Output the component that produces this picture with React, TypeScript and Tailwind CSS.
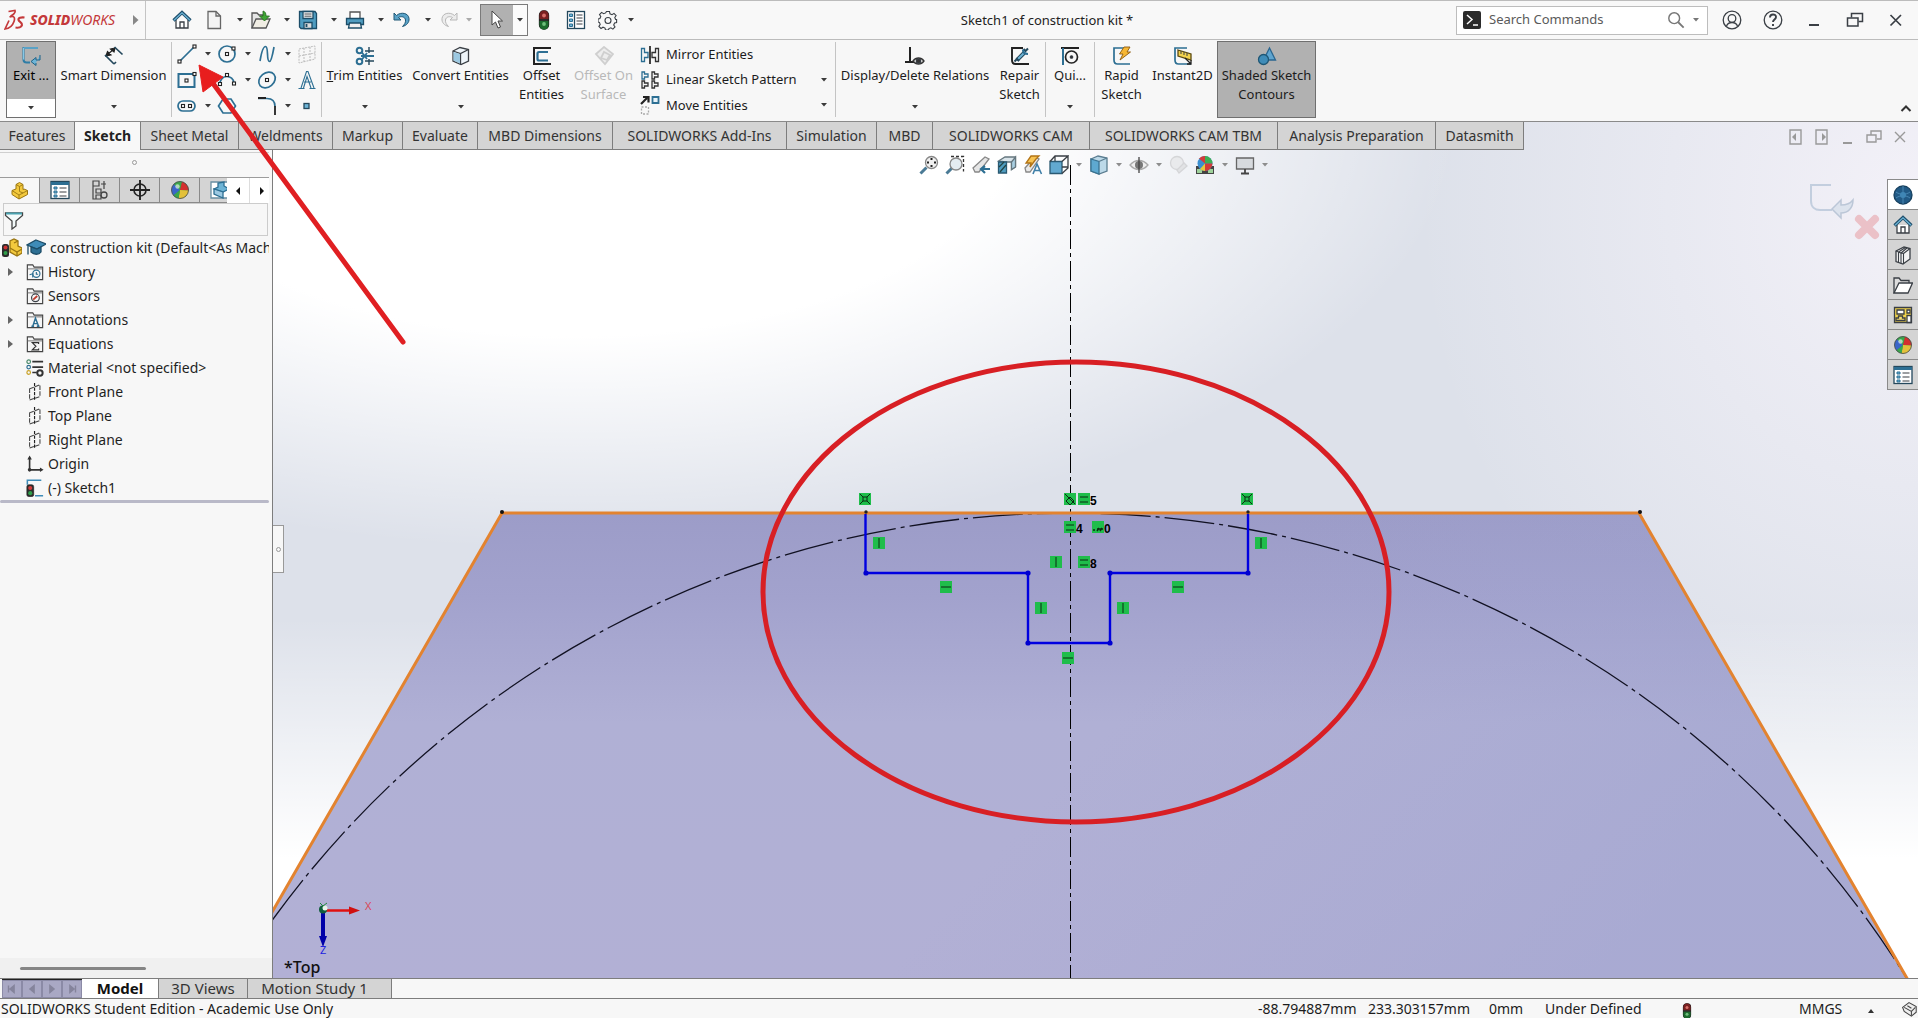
import React from "react";

type P = { children?: React.ReactNode; className?: string };

const INK = "#3a3f45";
const BLUE = "#2d6f93";
const SKY = "#6db4d6";

function Ico({ children, className = "h-5 w-5" }: P) {
  return (
    <svg viewBox="0 0 20 20" className={"shrink-0 " + className} fill="none" stroke={INK} strokeWidth="1.3" aria-hidden="true">
      {children}
    </svg>
  );
}

function Caret({ className = "text-[#3a3a3a]" }: P) {
  return (
    <svg viewBox="0 0 6 4" className={"h-1 w-1.5 shrink-0 " + className} fill="currentColor" aria-hidden="true">
      <path d="M0 0h6L3 3.6z" />
    </svg>
  );
}

function Sep() {
  return <div className="my-px w-px shrink-0 bg-[#c4c4c4]" />;
}

/* ---------- shared icons ---------- */

const Home = () => (
  <Ico>
    <path d="M4 10v8h12v-8" fill="#fff" />
    <path d="M8 18v-6h4v6" />
    <path d="M1.500 10.500 10 2.500l8.500 8" stroke="#1f4f6c" strokeWidth="3.200" />
    <path d="M2 10.200 10 2.800l8 7.400" stroke={SKY} strokeWidth="1.200" />
  </Ico>
);
const Traffic = ({ className = "h-5 w-5" }: P) => (
  <Ico className={className}>
    <rect x="5.500" y="1" width="9" height="18" rx="4" fill="#2c2c2c" stroke="#222" />
    <path d="M5.500 9V5a4 4 0 0 1 9 0v4z" fill="#7a2020" stroke="none" />
    <path d="M5.500 11v4a4 4 0 0 0 9 0v-4z" fill="#1d6b2e" stroke="none" />
    <circle cx="10" cy="5.500" r="1.900" fill="#d9706a" stroke="none" />
    <circle cx="10" cy="14" r="1.900" fill="#6fbf7c" stroke="none" />
  </Ico>
);
const ListIcon = () => (
  <Ico>
    <rect x="1.500" y="1.500" width="17" height="17" fill="#fff" stroke="#24485c" />
    <path d="M8.500 2v16" stroke="#24485c" />
    <path d="M3.500 4h3v2.500h-3zM3.500 9h3v2.500h-3zM3.500 14h3v2.500h-3z" fill={SKY} stroke={BLUE} strokeWidth="1" />
    <path d="M10.500 5h6M10.500 8h6M10.500 11h6M10.500 14h6" strokeWidth="1.200" />
  </Ico>
);
const FormIcon = () => (
  <Ico>
    <rect x="1" y="1.500" width="18" height="17" fill="#fff" stroke="#24485c" />
    <path d="M1 3.500h18" stroke={BLUE} strokeWidth="3" />
    <path d="M4 7h3v2H4zM4 11h3v2H4zM4 15h3v2H4z" fill={SKY} stroke={BLUE} strokeWidth="1" />
    <path d="M9.500 8h7M9.500 12h7M9.500 16h7" strokeWidth="1.200" />
  </Ico>
);
const Ball = () => (
  <Ico>
    <circle cx="10" cy="10" r="8.500" fill="#2f9e4a" stroke="none" />
    <path d="M10 10 4 4A8.500 8.500 0 0 0 3.500 15.500z" fill="#3a66c9" stroke="none" />
    <path d="M10 10 4 4a8.500 8.500 0 0 1 8-2.200z" fill="#3aa64c" stroke="none" />
    <path d="M10 10 12 1.800a8.500 8.500 0 0 1 6.500 8.700z" fill="#d32f2f" stroke="none" />
    <path d="M10 10 8.500 18.500a8.500 8.500 0 0 0 10-8z" fill="#e3c13a" stroke="none" />
    <path d="M10 10 3.500 15.500a8.500 8.500 0 0 0 5 3z" fill="#3aa64c" stroke="none" />
    <circle cx="7.500" cy="6.500" r="2.200" fill="#fff" opacity=".6" stroke="none" />
    <circle cx="10" cy="10" r="8.500" stroke="#4a4a4a" strokeWidth=".8" />
  </Ico>
);
const PartIcon = () => (
  <Ico>
    <path d="M2 9.500v4l7 4.500 8.500-4.500v-4L14 8l-1 .5V3.500L9.500 1.500 6 3.500V8z" fill="#f3c93d" stroke="#9a7613" strokeWidth="1" />
    <path d="M6 3.500l3.500 2 3.500-2M9.500 5.500v5l3.500 1.500 4.500-2.500M2 9.500l7 4.500v4M9 14l4-2" stroke="#9a7613" strokeWidth=".9" />
  </Ico>
);

/* ---------- title bar ---------- */

function QuickButton({ label, children, dim, w = "w-[47px]" }: { label: string; children: React.ReactNode; dim?: boolean; w?: string }) {
  return (
    <div className={"flex shrink-0 items-center justify-between pr-1 " + w}>
      <button aria-label={label} className="flex">{children}</button>
      <button aria-label={label + " options"} className="p-1"><Caret className={dim ? "text-[#aaa]" : "text-[#3a3a3a]"} /></button>
    </div>
  );
}

function TitleBar() {
  return (
    <header className="flex h-10 items-stretch border-b border-t border-[#bcbcbc] bg-[#f8f8f8]">
      <div className="flex w-[146px] shrink-0 items-center border-r border-[#c4c4c4] pl-1">
        <svg viewBox="0 0 22 22" className="h-[22px] w-[22px]" fill="none" stroke="#c4393a" strokeWidth="1.700" aria-hidden="true">
          <path d="M4.500 2.500 11 1.500c1 2-2 4.500-4.500 5.500" />
          <path d="M5.500 8c4-1.500 6 0 4.500 4.500C8.500 17 5 19.500 1 20l4-8.500" />
          <path d="M20.500 8.500c-3.500-.5-6.500.5-6 2.500.4 1.800 4 2.500 3.500 5-.4 2.200-3.500 3-6.500 2.500" strokeWidth="2.100" />
        </svg>
        <span className="ml-1 text-sm italic text-[#c4393a]"><b className="font-extrabold">SOLID</b>WORKS</span>
        <button aria-label="Show menus" className="ml-auto mr-1.5">
          <svg viewBox="0 0 6 10" className="h-2.5 w-1.5" fill="#888"><path d="M0 0l5.500 5L0 10z" /></svg>
        </button>
      </div>
      <div className="flex items-center pl-[26px]">
        <button aria-label="Home" className="mr-3"><Home /></button>
        <QuickButton label="New">
          <Ico><path d="M4 1.500h8l4.500 4.500v12.500H4z" fill="#f4f4f4" stroke="#666" /><path d="M12 1.500V6h4.500" stroke="#666" /></Ico>
        </QuickButton>
        <QuickButton label="Open">
          <Ico><path d="M1 18V3h5l2 2h4v4" fill="#e6e6e6" stroke="#555" /><path d="M1 18 5 9h14l-4 9z" fill="#f1eee4" stroke="#555" /><path d="M12 1v5h-3.500l5 5 5-5H15c0-3-1-4.500-3-5z" fill="#3fa535" stroke="#236b1c" strokeWidth=".8" /></Ico>
        </QuickButton>
        <QuickButton label="Save">
          <Ico><path d="M1.500 1.500h15.500l1.500 2v15H3l-1.500-1.500z" fill="#4f9cc0" stroke="#1c4d68" /><path d="M5 1.500h10v7H5z" fill="#f3f3f3" stroke="#1c4d68" /><path d="M6.500 4h7M6.500 6.200h7" strokeWidth=".9" /><path d="M6 12.500h8v6H6z" fill="#ddd" stroke="#1c4d68" /><path d="M8.500 14v3" stroke="#1c4d68" strokeWidth="1.800" /></Ico>
        </QuickButton>
        <QuickButton label="Print">
          <Ico><path d="M5 8V2h10v6" fill="#fff" stroke="#555" /><path d="M1.500 8.500h17v6h-17z" fill="#4f9cc0" stroke="#1c4d68" /><path d="M4.500 13h11l1 5h-13z" fill="#f0f0f0" stroke="#1c4d68" /></Ico>
        </QuickButton>
        <QuickButton label="Undo">
          <Ico><path d="M2 3v7h7L6.500 7.500C9 6 13 6.500 13.500 10c.3 2.500-1 4.500-3 6.500 4-1 7-4 6.500-8C16.500 3 9 1.500 4.500 5.500z" fill="#5aa3c8" stroke="#1f5775" strokeWidth="1" /></Ico>
        </QuickButton>
        <QuickButton label="Redo" dim w="w-[41px]">
          <Ico><path d="M18 3v7h-7l2.500-2.500C11 6 7 6.500 6.500 10c-.3 2.500 1 4.500 3 6.500-4-1-7-4-6.500-8C3.500 3 11 1.500 15.500 5.500z" fill="#ececec" stroke="#b8b8b8" strokeWidth="1" /></Ico>
        </QuickButton>
        <div className="flex h-8 border border-[#7a7a7a]">
          <button aria-label="Select" className="flex w-8 items-center justify-center bg-[#b1b1b1]">
            <Ico><path d="M5 1v14l3.500-3 2.500 6 2.500-1-2.500-6h4.500z" fill="#fff" stroke="#444" strokeWidth="1" /></Ico>
          </button>
          <button aria-label="Select options" className="flex w-3.5 items-center justify-center bg-[#fbfbfb]"><Caret /></button>
        </div>
        <button aria-label="Rebuild" className="ml-1.5"><Traffic /></button>
        <button aria-label="File properties" className="ml-3"><ListIcon /></button>
        <button aria-label="Options" className="ml-3">
          <Ico><path d="M8.500 1.500h3l.5 2.300 2 .9 2-1.300 2.100 2.100-1.300 2 .8 2h1v3l-2 .5-.9 2 1.300 2-2.100 2.100-2-1.300-2 .8-.4 1.400h-3l-.5-1.900-2-.9-2 1.300-2.100-2.100 1.300-2-.8-2-1.400-.4v-3l1.900-.5.900-2-1.300-2 2.100-2.100 2 1.300 2-.8z" strokeWidth="1.100" /><circle cx="10" cy="10.500" r="3" strokeWidth="1.100" /></Ico>
        </button>
        <button aria-label="Options menu" className="ml-1.5 p-1"><Caret /></button>
      </div>
      <h1 className="flex flex-1 items-center justify-center pt-0.5 text-[13px] text-[#222]">Sketch1 of construction kit *</h1>
      <div className="flex items-center pr-3">
        <label className="flex h-[29px] w-[252px] items-center border border-[#bdbdbd] bg-white pl-1.5 pr-1">
          <svg viewBox="0 0 18 18" className="h-[18px] w-[18px] shrink-0" aria-hidden="true">
            <rect width="18" height="18" rx="2" fill="#2b2b2b" />
            <path d="M4 4l5 4.500L4 13M10 14h5" stroke="#fff" strokeWidth="1.500" fill="none" />
          </svg>
          <input aria-label="Search commands" placeholder="Search Commands" className="ml-2 min-w-0 flex-1 bg-transparent text-[13px] text-[#555] outline-none placeholder:text-[#5a5a5a]" />
          <Ico className="h-[18px] w-[18px]"><circle cx="8" cy="8" r="6" stroke="#777" strokeWidth="1.600" /><path d="m12.500 12.500 6 6" stroke="#777" strokeWidth="2" /></Ico>
          <Caret className="ml-2 mr-1 text-[#777]" />
        </label>
        <button aria-label="Account" className="ml-3.5"><Ico><circle cx="10" cy="10" r="8.800" /><circle cx="10" cy="8.500" r="3.800" /><path d="M4.500 16c1-2.500 3-3.500 5.500-3.500s4.500 1 5.500 3.500" /></Ico></button>
        <button aria-label="Help" className="ml-[21px]"><Ico><circle cx="10" cy="10" r="8.800" /><path d="M7 7.500c0-4 6-4 6-.5 0 2.500-3 2.500-3 5M10 14v2" strokeWidth="1.900" /></Ico></button>
        <button aria-label="Minimize" className="ml-[21px]"><Ico><path d="M5 15h10" strokeWidth="2" /></Ico></button>
        <button aria-label="Restore" className="ml-[21px]"><Ico><path d="M6.500 7.500V3.500h11v8h-4" strokeWidth="1.500" /><path d="M2.500 8h10.500v8H2.500z" strokeWidth="1.500" /></Ico></button>
        <button aria-label="Close" className="ml-[21px]"><Ico><path d="m4.500 5 10.500 10.500M15 5 4.500 15.500" strokeWidth="1.700" /></Ico></button>
      </div>
    </header>
  );
}

/* ---------- ribbon ---------- */

function BigButton({ w, lines, icon, caret, dim, active, first }: { w: string; lines: string[]; icon: React.ReactNode; caret?: boolean; dim?: boolean; active?: boolean; first?: string }) {
  return (
    <button className={"relative flex shrink-0 flex-col items-center pt-1 text-[13px] leading-[19px] " + w + (dim ? " text-[#b9b9b9]" : " text-[#1c1c1c]") + (active ? " border border-[#6f6f6f] bg-[#b1b1b1]" : " border border-transparent")}>
      {icon}
      <span className="flex flex-col whitespace-nowrap">
        {lines.map((l, i) => <span key={l}>{i === 0 && first ? <><u>{first}</u>{l.slice(1)}</> : l}</span>)}
      </span>
      {caret && <Caret className="absolute bottom-2 text-[#3a3a3a]" />}
    </button>
  );
}

function Node({ x, y }: { x: number; y: number }) {
  return <rect x={x - 1.500} y={y - 1.500} width="3" height="3" fill="#fff" stroke="#222" strokeWidth="1.100" />;
}

function SketchTool({ label, children, caret = true }: { label: string; children: React.ReactNode; caret?: boolean }) {
  return (
    <div className="flex h-[26px] w-10 items-center">
      <button aria-label={label}><Ico>{children}</Ico></button>
      {caret && <button aria-label={label + " options"} className="ml-1 p-1"><Caret /></button>}
    </div>
  );
}

function RowTool({ label, icon, caret }: { label: string; icon: React.ReactNode; caret?: boolean }) {
  return (
    <div className="flex h-[26px] items-center justify-between">
      <button className="flex items-center gap-1.5 text-[13px] text-[#1c1c1c]">{icon}{label}</button>
      {caret && <button aria-label={label + " options"} className="p-1"><Caret /></button>}
    </div>
  );
}

const blue = { stroke: BLUE, strokeWidth: 1.700 };

function Ribbon() {
  return (
    <div className="flex h-[82px] items-stretch border-b border-[#8a8a8a] bg-[#f7f7f7] pb-[3px] pl-1.5 pt-px">
      <div className="flex w-[50px] shrink-0 flex-col border border-[#6f6f6f] text-[13px]">
        <button className="flex flex-1 flex-col items-center bg-[#b1b1b1] pt-1 leading-[19px]">
          <Ico><path d="M17 2H2.500v11.500c0 2 1 3 3 3H9" stroke="#2f7da6" strokeWidth="2" /><path d="M17 2H2.500v11.500" stroke="#8fd0ee" strokeWidth=".9" /><path d="M19 9v5h-4v-2.500L10 15.500l5 4V17" stroke="#1f6388" fill={SKY} strokeWidth="1" /></Ico>
          <span>Exit ...</span>
        </button>
        <button aria-label="Exit options" className="flex h-[18px] items-center justify-center bg-white"><Caret /></button>
      </div>
      <BigButton w="w-[115px]" lines={["Smart Dimension"]} caret icon={<Ico><path d="m3 9 7-6M2 10l5-1-3.500-3.500z M11 2 6.500 3 10 6z" fill="#222" stroke="#222" strokeWidth="1.200" /><path d="m1 9 9 9 M10.500 1l8 7.500M10 18l2-2" stroke="#24485c" strokeWidth="1.700" /></Ico>} />
      <Sep />
      <div className="grid shrink-0 grid-cols-[40px_40px_40px_24px] content-start pl-[5px]">
        <SketchTool label="Line"><path d="M3 17 17 3" {...blue} /><Node x={2.500} y={17.500} /><Node x={17.500} y={2.500} /></SketchTool>
        <SketchTool label="Circle"><circle cx="10" cy="10" r="8" {...blue} /><Node x={10} y={10} /><Node x={16.500} y={4.500} /></SketchTool>
        <SketchTool label="Spline"><path d="M3 17C4.500 8 6 2.500 8.500 2.500c3.500 0 .5 15 4 15 2 0 3.500-9 4.500-14.500" {...blue} /></SketchTool>
        <SketchTool label="Plane" caret={false}><path d="M2 5l16-3v13L2 19zM7 4v14M13 3v14M2 12l16-3" stroke="#bdbdbd" strokeWidth="1" strokeDasharray="2 1" /></SketchTool>
        <SketchTool label="Rectangle"><path d="M1.500 4h16v13h-16z" {...blue} strokeWidth={2} /><Node x={9.500} y={10.500} /><Node x={17.500} y={4} /></SketchTool>
        <SketchTool label="Arc"><path d="M3 14A7 7 0 0 1 17 13" {...blue} /><Node x={3} y={14} /><Node x={17} y={13.500} /><Node x={10} y={5} /></SketchTool>
        <SketchTool label="Ellipse"><ellipse cx="10" cy="10" rx="9" ry="7" transform="rotate(-40 10 10)" {...blue} /><Node x={10} y={10} /></SketchTool>
        <SketchTool label="Text" caret={false}><path d="M1.500 18.500h6M12.500 18.500h6M4 18 9.500 1.500h1.500L17 18M7 12h7M6.500 18 10 6.500l4 11.500" stroke={BLUE} strokeWidth="1.100" /></SketchTool>
        <SketchTool label="Slot"><rect x="1" y="5" width="17" height="10" rx="5" {...blue} /><Node x={6} y={10} /><Node x={13} y={10} /></SketchTool>
        <SketchTool label="Polygon" caret={false}><path d="M6 3h8l4.500 7-4.500 7H6l-4.500-7z" {...blue} /></SketchTool>
        <SketchTool label="Fillet"><path d="M1 2.500h9c5 0 8 3 8 8" {...blue} /><path d="M1 2h8M18 10v9" stroke="#222" strokeWidth="1.800" /></SketchTool>
        <SketchTool label="Point" caret={false}><rect x="7" y="7.500" width="5" height="5" fill={SKY} stroke="#24485c" strokeWidth="1.300" /></SketchTool>
      </div>
      <Sep />
      <BigButton w="w-[85px]" lines={["Trim Entities"]} first="T" caret icon={<Ico><circle cx="4.500" cy="4.500" r="2.800" stroke={BLUE} strokeWidth="2" /><circle cx="4.500" cy="15.500" r="2.800" stroke={BLUE} strokeWidth="2" /><path d="M6.500 6 12 13M6.500 14 12 7M6 10h13" stroke={BLUE} strokeWidth="1.800" /><path d="M14 1v6M14 13v6M10 5h9M10 15h9" stroke="#24485c" strokeWidth="1.400" /></Ico>} />
      <BigButton w="w-[107px]" lines={["Convert Entities"]} caret icon={<Ico><path d="m2 5 7-3.500 8.500 2V15L10 18.500 2 15z" fill="#eef5fa" /><path d="M2 5l7.500 2.500 8-4M9.500 7.500v11" /><path d="m2.500 6 6.500 2v9.500l-6.500-3z" fill="#9cc9e2" stroke="none" /></Ico>} />
      <BigButton w="w-[55px]" lines={["Offset", "Entities"]} icon={<Ico><path d="M19 2H2v16h17" stroke="#222" strokeWidth="2" /><path d="M16 6H7c-1 0-1.500.5-1.500 1.500V13c0 1 .5 1.500 1.500 1.500h9" stroke={BLUE} strokeWidth="2.200" /></Ico>} />
      <BigButton w="w-[69px]" dim lines={["Offset On", "Surface"]} icon={<Ico><path d="m2 8 8-7 9 7-8 10z M7 12l3-6 6 3-3 5z" stroke="#cfcfcf" fill="#ededed" strokeWidth="1.800" /></Ico>} />
      <div className="flex w-[197px] shrink-0 flex-col pl-0.5 pr-1 pt-px">
        <RowTool label="Mirror Entities" icon={<Ico><path d="M1.500 3.500h3v4h3.500v5H4.500v4h-3z" stroke={BLUE} /><path d="M10 1v18" stroke="#222" strokeWidth="1.700" /><path d="M18.500 3.500h-3v4H12v5h3.500v4h3z" stroke="#333" /></Ico>} />
        <RowTool caret label="Linear Sketch Pattern" icon={<Ico><path d="M2 2h2.500v2H8v3H4.500v2H2z" stroke={BLUE} /><path d="M12 2h2.500v2H18v3h-3.500v2H12z" stroke="#333" /><path d="M2 11h2.500v2H8v3H4.500v2H2zM12 11h2.500v2H18v3h-3.500v2H12z" stroke="#333" /></Ico>} />
        <RowTool caret label="Move Entities" icon={<Ico><path d="M1 9 7 3M3 2h5.500v5.500" stroke="#222" strokeWidth="2.200" /><path d="M12.500 2h6v6h-6z" stroke={BLUE} strokeWidth="1.800" fill="#e8f3f9" /><path d="M1.500 12h7v7h-7z" stroke="#aaa" strokeDasharray="2 1.500" /></Ico>} />
      </div>
      <Sep />
      <BigButton w="w-[158px]" lines={["Display/Delete Relations"]} caret icon={<Ico><path d="M5 1v15M0 16h12" stroke="#222" strokeWidth="2" /><path d="M8 15c3-4 8-4 11 0-3 4-8 4-11 0z" fill="#fff" stroke="#333" /><circle cx="13.500" cy="15" r="2.200" fill="#333" /></Ico>} />
      <BigButton w="w-[51px]" lines={["Repair", "Sketch"]} icon={<Ico><path d="M13 2H2v12c0 2.500 1 4 3.500 4H19" stroke="#222" strokeWidth="1.900" /><path d="m7 14 7-7" stroke="#24485c" strokeWidth="4" /><path d="m7 14 7-7" stroke={SKY} strokeWidth="2" /><path d="M18 2.500 15.500 5l-2-2M4.500 15.500 7 13l2 2" stroke="#24485c" strokeWidth="2" /><path d="M13 3.500c0 3 1.500 4.500 5 4.500" stroke={BLUE} strokeWidth="2.200" /></Ico>} />
      <Sep />
      <BigButton w="w-12" lines={["Qui..."]} caret icon={<Ico><path d="M1 2h18" stroke="#222" strokeWidth="2" /><path d="M3 2v17" stroke={BLUE} strokeWidth="2" /><circle cx="11.500" cy="11" r="6" stroke="#222" strokeWidth="1.700" /><circle cx="11.500" cy="11" r="1.200" fill="#222" /></Ico>} />
      <Sep />
      <BigButton w="w-[53px]" lines={["Rapid", "Sketch"]} icon={<Ico><path d="M12 2H2v12c0 2.500 1 4 3.500 4H18" stroke={BLUE} strokeWidth="1.700" /><path d="M12 1h6l-3 5h3.500L8 14l3-6H7.500z" fill="#f7b733" stroke="#8a5a12" strokeWidth=".9" /></Ico>} />
      <BigButton w="w-[69px]" lines={["Instant2D"]} icon={<Ico><path d="M14 2H2v12c0 2.500 1 4 3.500 4H18" stroke={BLUE} strokeWidth="1.700" /><path d="m5 4 13 4v6L5 10z" fill="#f2d24d" stroke="#5b4a10" /><path d="M8 5v3M11 6v3M14 7v3" strokeWidth="1" /><path d="m12 12 6 6M18 14v4h-4" stroke="#222" /></Ico>} />
      <BigButton w="w-[99px]" active lines={["Shaded Sketch", "Contours"]} icon={<Ico><path d="m12.500 2 6 12h-12z" fill="#5fa5d0" stroke="#2a6690" /><circle cx="6.500" cy="13.500" r="5" fill="#3f8cb8" stroke="#1f5775" /></Ico>} />
      <button aria-label="Collapse ribbon" className="ml-auto mr-1.5 self-end pb-1.5">
        <svg viewBox="0 0 12 8" className="h-2 w-3" fill="none" stroke="#333" strokeWidth="2"><path d="M1.500 7 6 2.500 10.500 7" /></svg>
      </button>
    </div>
  );
}

const TABS: [string, string][] = [
  ["Features", "w-[75px]"], ["Sketch", "w-[66px]"], ["Sheet Metal", "w-[98px]"], ["Weldments", "w-[94px]"],
  ["Markup", "w-[70px]"], ["Evaluate", "w-[75px]"], ["MBD Dimensions", "w-[135px]"], ["SOLIDWORKS Add-Ins", "w-[174px]"],
  ["Simulation", "w-[90px]"], ["MBD", "w-[56px]"], ["SOLIDWORKS CAM", "w-[157px]"], ["SOLIDWORKS CAM TBM", "w-[188px]"],
  ["Analysis Preparation", "w-[158px]"], ["Datasmith", "w-[88px]"],
];

function CommandTabs() {
  return (
    <div className="flex h-7 items-stretch">
      <nav aria-label="Command tabs" className="flex">
        {TABS.map(([t, w]) => (
          <button key={t} className={"shrink-0 whitespace-nowrap border-r border-[#7d7d7d] text-sm leading-none " + w + (t === "Sketch" ? " bg-[#f8f8f8] font-bold text-[#222]" : " border-b bg-[#d4d4d4] text-[#333]")}>{t}</button>
        ))}
      </nav>
      <div className="ml-auto flex items-center gap-1.5 pr-2 pt-0.5">
        {[
          <><path d="M4 3h11v14H4z" /><path d="M10 6v8l-4-4z" fill="#999" stroke="none" /></>,
          <><path d="M4 3h11v14H4z" /><path d="M10 6v8l4-4z" fill="#999" stroke="none" /></>,
          <path d="M5 16h9" strokeWidth="2" />,
          <><path d="M7 8V4h10v8h-4" /><path d="M3 8h9v7H3z" /></>,
          <path d="m5 5 10 10M15 5 5 15" />,
        ].map((c, i) => (
          <button key={i} aria-label={["Previous window", "Next window", "Minimize document", "Restore document", "Close document"][i]} className="text-[#999]">
            <svg viewBox="0 0 20 20" className="h-5 w-5" fill="none" stroke="currentColor" strokeWidth="1.400">{c}</svg>
          </button>
        ))}
      </div>
    </div>
  );
}

/* ---------- feature tree ---------- */

const Folder = ({ children }: P) => (
  <Ico className="h-[18px] w-[18px]"><path d="M1.500 18.500V2h6l1.500 2.500h9.500v14z" fill="#f6f6f6" stroke="#444" /><path d="M2 6.500h16" stroke="#888" />{children}</Ico>
);
const PlaneIcon = () => (
  <Ico className="h-[18px] w-[18px]"><path d="M4 6.500 15.500 2v13L4 19z" stroke="#444" strokeWidth="1.200" strokeDasharray="5 1.500" /><path d="M9.500 0v20" stroke="#222" strokeDasharray="3.500 1.500" /></Ico>
);

const TREE: { label: string; exp?: boolean; icon: React.ReactNode }[] = [
  { label: "History", exp: true, icon: <Folder><circle cx="11.500" cy="12" r="4" stroke={BLUE} /><path d="M11.500 10v2.500h2M4 13l3.500-1v4" stroke={BLUE} /></Folder> },
  { label: "Sensors", icon: <Folder><circle cx="10.500" cy="12" r="4.300" /><path d="m8 14 4.500-4" stroke="#c0392b" strokeWidth="2" /></Folder> },
  { label: "Annotations", exp: true, icon: <Folder><path d="M6 17h3M12 17h3M7.500 17l3-9 3.500 9M8.500 14h4" stroke={BLUE} strokeWidth="1.600" /></Folder> },
  { label: "Equations", exp: true, icon: <Folder><path d="M14 10V8.500H7L11 12.500 7 16.500h7V15" stroke="#333" /></Folder> },
  { label: "Material <not specified>", icon: <Ico className="h-[18px] w-[18px]"><circle cx="3" cy="3" r="2" stroke="#4b8a6b" /><circle cx="3" cy="9" r="2" stroke={BLUE} /><circle cx="3" cy="15" r="2" stroke="#c9a227" /><path d="M7 3h12M7 9h12M7 15h5" stroke="#333" strokeWidth="1.900" /><circle cx="15.500" cy="15.500" r="3" stroke="#333" strokeWidth="2.200" /></Ico> },
  { label: "Front Plane", icon: <PlaneIcon /> },
  { label: "Top Plane", icon: <PlaneIcon /> },
  { label: "Right Plane", icon: <PlaneIcon /> },
  { label: "Origin", icon: <Ico className="h-[18px] w-[18px]"><path d="M4 3v13.500h12" stroke="#333" strokeWidth="1.800" /><path d="M1.500 5 4 .5 6.500 5zM15.500 14l4 2.500-4 2.500z" fill="#333" stroke="none" /><circle cx="4" cy="16.500" r="2" fill="#333" stroke="none" /></Ico> },
  { label: "(-) Sketch1", icon: <Ico className="h-[18px] w-[18px]"><path d="M17 1.500H1.500v5M10 18.500h9" stroke="#3f8cb8" strokeWidth="1.700" /><rect x="1" y="6.500" width="7.500" height="13" rx="2" fill="#2c2c2c" stroke="#222" strokeWidth=".8" /><circle cx="4.700" cy="10" r="2.300" fill="#d13b3b" stroke="none" /><circle cx="4.700" cy="15.700" r="2.300" fill="#2f9e4a" stroke="none" /></Ico> },
];

function FeaturePanel() {
  const panes: [string, React.ReactNode][] = [
    ["Feature tree", <PartIcon />],
    ["Property manager", <FormIcon />],
    ["Configuration manager", <Ico><path d="M3 1h6v5H3zM3 6v13h3M6 9h5v4H6zM6 15h5v4H6zM11 4h5M14 1v8" strokeWidth="1.200" stroke="#444" /><circle cx="14" cy="15" r="3" stroke="#444" /></Ico>],
    ["DimXpert", <Ico><circle cx="10" cy="10" r="6" stroke="#222" strokeWidth="1.600" /><path d="M10 0v20M0 10h20" stroke="#222" strokeWidth="1.900" /></Ico>],
    ["Display manager", <Ball />],
  ];
  return (
    <aside className="flex w-[273px] shrink-0 flex-col border-r border-[#7d7d7d] bg-[#f7f7f7]">
      <div className="mr-[3px] mt-0.5 flex h-[25px] items-center justify-center border-t border-[#cfcfcf] pb-1.5">
        <span className="h-[5px] w-[5px] rounded-full border border-[#999]" />
      </div>
      <div className="mr-[3px] flex h-[26px] border-t border-[#9c9c9c]">
        {panes.map(([l, ic], i) => (
          <button key={l} aria-label={l} className={"flex w-10 shrink-0 items-center justify-center border-r border-[#8a8a8a]" + (i === 0 ? " bg-[#f7f7f7]" : " border-b bg-[#d4d4d4]")}>{ic}</button>
        ))}
        <button aria-label="CAM tree" className="flex flex-1 items-center overflow-hidden border-b border-[#8a8a8a] bg-[#d4d4d4] pl-2.5">
          <Ico><path d="M1 2h18v16H1z" fill="#fff" stroke="#6a8fa3" /><path d="M4 9l4-2V3l6-1v4l5 3-6 3z" fill={SKY} stroke={BLUE} /><path d="M4 9v5l9 4v-6z" fill="#9cc9e2" stroke={BLUE} /></Ico>
        </button>
        <button aria-label="Scroll tabs left" className="flex w-[22px] items-center justify-center bg-white"><svg viewBox="0 0 4 8" className="h-2 w-1" fill="#111"><path d="M4 0v8L0 4z" /></svg></button>
        <button aria-label="Scroll tabs right" className="flex w-5 items-center justify-center border-l border-[#ddd] bg-white pl-1"><svg viewBox="0 0 4 8" className="h-2 w-1" fill="#111"><path d="M0 0v8l4-4z" /></svg></button>
      </div>
      <label className="ml-[3px] mr-1 flex h-[33px] items-center border border-[#cccccc]">
        <Ico><path d="M1.500 3h17v2.500L12 11v5l-4 3v-8L1.500 5.500z" fill="#f4fbfb" stroke="#444" /><path d="M2 3.500h16" stroke="#4aa3b0" strokeWidth="2" /></Ico>
        <input aria-label="Filter tree" className="min-w-0 flex-1 bg-transparent px-1 text-sm outline-none" />
      </label>
      <ul className="mr-[3px] overflow-hidden text-sm text-[#1f1f1f]">
        <li className="flex h-6 items-center whitespace-nowrap pl-0.5">
          <Ico><rect x="0" y="6" width="7" height="13" rx="2.500" fill="#2c2c2c" stroke="none" /><circle cx="3.500" cy="9.500" r="2" fill="#c33" stroke="none" /><circle cx="3.500" cy="15" r="2" fill="#2f9e4a" stroke="none" /><path d="M8 8V3l4-2 4 2v5l4 2v5l-5 3-7-4z" fill="#f3c93d" stroke="#9a7613" /><path d="m8 10 7 4 5-3M15 14v4M12 5l4-2" stroke="#9a7613" /></Ico>
          <Ico className="ml-1 mr-1 h-5 w-5"><path d="M10 2 20 6 11 11 1 7z" fill="#3f8cb8" stroke="#1c4d68" /><path d="M5 9v5c3 3 8 3 10 0V9l-4 2z" fill="#2d6f93" stroke="#1c4d68" /><path d="M2 7.500v9" stroke="#1c4d68" /></Ico>
          construction kit (Default&lt;As Machined&gt;)
        </li>
        {TREE.map((n) => (
          <li key={n.label} className="flex h-6 items-center whitespace-nowrap">
            <span className="w-[26px] shrink-0 pl-2">
              {n.exp && <button aria-label={"Expand " + n.label} className="block"><svg viewBox="0 0 5 8" className="h-2 w-[5px]" fill="#666"><path d="M0 0v8l5-4z" /></svg></button>}
            </span>
            {n.icon}
            <span className="ml-1">{n.label}</span>
          </li>
        ))}
      </ul>
      <div className="mr-[3px] h-[3px] rounded-sm bg-[#b9b9c8]" />
      <div className="mt-auto flex h-5 items-center bg-[#f0f0f0] pl-5">
        <div className="h-[3px] w-1/2 rounded bg-[#858585]" />
      </div>
    </aside>
  );
}

/* ---------- graphics area ---------- */

function Rel({ x, y, kind, n }: { x: number; y: number; kind: "v" | "h" | "x" | "e" | "t" | "m"; n?: string }) {
  return (
    <g stroke="#0b2a12" strokeWidth="1" fill="none">
      <rect x={x - 6} y={y - 6} width="12" height="12" fill="#1fbd4b" stroke="none" />
      {kind === "v" && <path d={`M${x} ${y - 5}v10`} />}
      {kind === "h" && <path d={`M${x - 5} ${y}h10`} />}
      {kind === "e" && <path d={`M${x - 4} ${y - 2}h8M${x - 4} ${y + 3}h8`} />}
      {kind === "x" && <path d={`M${x - 5} ${y - 5}l3 3M${x + 5} ${y - 5}l-3 3M${x - 5} ${y + 5}l3-3M${x + 5} ${y + 5}l-3-3M${x - 2} ${y - 2}h4v4h-4z`} />}
      {kind === "t" && <path d={`M${x - 5} ${y - 5}L${x + 5} ${y + 5}M${x} ${y - 2}l4 4-4 4-4-4z`} />}
      {kind === "m" && <path d={`M${x - 5} ${y + 3}h2M${x - 1} ${y + 4}l2-3M${x + 2} ${y + 4}l2-3M${x - 1} ${y + 2}h6`} strokeWidth="1.500" />}
      {n && <text x={x + 6} y={y + 6} className="font-['Liberation_Sans',sans-serif]" fill="#000" stroke="none" fontSize="12" fontWeight="700">{n}</text>}
    </g>
  );
}

const NODES: [number, number][] = [[866, 573], [1028, 573], [1028, 643], [1110, 643], [1110, 573], [1248, 573]];

function Drawing() {
  return (
    <svg viewBox="273 150 1645 828" preserveAspectRatio="xMidYMid slice" className="absolute inset-0 h-full w-full" role="img" aria-label="Sketch geometry">
      <defs>
        <linearGradient id="face" x1="0" y1="0" x2="0" y2="1">
          <stop offset="0" stopColor="#9c9cc8" />
          <stop offset=".18" stopColor="#a2a2cd" />
          <stop offset=".45" stopColor="#b0b0d5" />
          <stop offset="1" stopColor="#b2b0d5" />
        </linearGradient>
        <linearGradient id="faceSide" x1="0" y1="0" x2="1" y2=".25">
          <stop offset=".6" stopColor="#a0a4d0" stopOpacity="0" />
          <stop offset="1" stopColor="#a0a4d0" stopOpacity=".5" />
        </linearGradient>
      </defs>
      <path d="M502 513H1639L1908 980H233z" fill="url(#face)" />
      <path d="M502 513H1639L1908 980H233z" fill="url(#faceSide)" />
      <circle cx="1070" cy="1498" r="985" fill="none" stroke="#111122" strokeWidth="1.300" strokeDasharray="50 5 4 5" />
      <path d="M1070.500 165V978" stroke="#000" strokeWidth="1" strokeDasharray="20 4 4 4" />
      <path d="M233 980 502 513H1639L1908 980" fill="none" stroke="#e3832f" strokeWidth="3" />
      <circle cx="502" cy="512" r="2" fill="#111" />
      <circle cx="1640" cy="512" r="2" fill="#111" />
      <path d="M865.500 514v59H1028v70h82v-70h138v-59" fill="none" stroke="#0000e0" strokeWidth="2.400" />
      {NODES.map(([x, y]) => <circle key={x + "-" + y} cx={x} cy={y} r="2.600" fill="#0000d0" />)}
      <circle cx="866" cy="512" r="1.700" fill="#222" />
      <circle cx="1248" cy="512" r="1.700" fill="#222" />
      <Rel x={865} y={499} kind="x" /><Rel x={1247} y={499} kind="x" />
      <Rel x={1070} y={499} kind="t" /><Rel x={1084} y={499} kind="e" n="5" />
      <Rel x={1070} y={527} kind="e" n="4" /><Rel x={1098} y={527} kind="m" n="0" />
      <Rel x={1056} y={562} kind="v" /><Rel x={1084} y={562} kind="e" n="8" />
      <Rel x={879} y={543} kind="v" /><Rel x={1261} y={543} kind="v" />
      <Rel x={946} y={587} kind="h" /><Rel x={1178} y={587} kind="h" />
      <Rel x={1041} y={608} kind="v" /><Rel x={1123} y={608} kind="v" /><Rel x={1068} y={658} kind="h" />

      <path d="M325 910.500h26" stroke="#e01010" strokeWidth="2.500" />
      <path d="m349 906.500 11 4-11 4z" fill="#d01010" />
      <path d="M323 912v28" stroke="#0000a8" strokeWidth="4" />
      <path d="m319 936 4 11 4-11z" fill="#0000a8" />
      <circle cx="323" cy="909.500" r="4" fill="#0f5c3c" />
      <circle cx="325" cy="908" r="2.500" fill="#e8f5ea" />
      <path d="m320 903 3 3 4-3" stroke="#1d8a3a" fill="none" />
      <text x="365" y="910" fontSize="11" fill="#d9485a">X</text>
      <text x="320" y="954" fontSize="11" fill="#2020e0">Z</text>
      <text x="284" y="973" fontSize="16" fontWeight="500" fill="#111">*Top</text>

      <g opacity=".45">
        <path d="M1831 185h-20v16c0 6 4 9 9 9h12" fill="none" stroke="#8fa9c4" strokeWidth="2" />
        <path d="m1832 209 9-9v5c5 0 9-1 12-5 0 8-5 13-12 13v5z" fill="#c6d5e3" stroke="#7d97b3" strokeWidth="1.500" />
        <path d="m1859 219 16 16m0-16-16 16" stroke="#e58a90" strokeWidth="8" strokeLinecap="round" />
      </g>
    </svg>
  );
}

function HeadsUp() {
  const glass = "#bcd9e8";
  const C = () => <button aria-label="View options" className="mx-[5px] p-0.5"><Caret className="text-[#8d8d8d]" /></button>;
  return (
    <div className="absolute left-[646px] top-[5px] flex items-center gap-1.5">
      <button aria-label="Zoom to fit"><Ico><path d="m1.500 18.500 6-6" stroke="#4a7a95" strokeWidth="3" /><circle cx="12.500" cy="7.500" r="6" fill="#f0f0f0" stroke="#888" /><path d="M12.500 3v2M12.500 10v2M8 7.500h2M15 7.500h2" stroke="#222" strokeWidth="2" /></Ico></button>
      <button aria-label="Zoom to area"><Ico><path d="m1.500 18.500 6-6" stroke="#4a7a95" strokeWidth="3" /><circle cx="11" cy="9" r="6" fill="#e4ecf1" stroke="#888" /><path d="M6 1.500h12.500v15" stroke="#333" strokeDasharray="3 2" /></Ico></button>
      <button aria-label="Previous view"><Ico><path d="M2 13 14 2l4 2L8 17H4z" fill="#e6e6e6" stroke="#888" /><path d="M19 14h-8m3-3-4 3 4 4" stroke="#2d6f93" strokeWidth="2.200" /></Ico></button>
      <button aria-label="Section view"><Ico><path d="M1.500 6 8 2h10.500v10l-4 2.500V7h-6z" fill="#d9e4ea" stroke="#66777f" /><path d="M14.500 7 18.500 2v10l-4 2.500z" fill="#a9cfe2" stroke="#66777f" /><path d="M1.500 7h8v11h-8z" fill="#4f9cc0" stroke="#2a5a73" /><path d="m2 12 5-5M3 17l6-7" stroke="#244" /></Ico></button>
      <button aria-label="Dynamic annotation views"><Ico><path d="M2 13 12 2l4 2-9 13H3z" fill="#e9e9e9" stroke="#888" /><path d="M8 1h8l-3 3-6 8 1-4H3z" fill="#f7c352" stroke="#b37416" /><path d="m10 19 4-10 4.500 10M11.500 15.500h5" stroke="#3f7fa8" strokeWidth="1.600" /></Ico></button>
      <div className="flex items-center">
        <button aria-label="View orientation"><Ico><path d="M1 6.500h12v12H1z" fill="#62a9d0" stroke="#2a5a73" /><path d="M1 6.500 6 1h13l-6 5.500M19 1v12l-6 5.500M6 1v5M13 12h6" /></Ico></button>
        <C />
        <button aria-label="Display style"><Ico><path d="m2 4 7-3 9 2v13l-8 3-8-3z" fill={glass} stroke="#5b7d90" /><path d="m2 4 8 2.500V19l-8-3z" fill="#5ea9d0" stroke="#3a7391" /><path d="M10 6.500 18 3" stroke="#5b7d90" /></Ico></button>
        <C />
        <button aria-label="Hide or show items"><Ico><path d="M1 10c5-6 13-6 18 0-5 6-13 6-18 0z" fill="#eee" stroke="#aaa" /><circle cx="10" cy="10" r="4" fill="#777" stroke="none" /><path d="M10 2v16" stroke="#444" /></Ico></button>
        <C />
        <button aria-label="Edit appearance" className="opacity-40"><Ico><circle cx="8" cy="8" r="6.500" fill="#ddd" stroke="#aaa" /><path d="m10 18 8-7-3-3-7 7z" fill="#ccc" stroke="#aaa" /></Ico></button>
      </div>
      <div className="flex items-center">
        <button aria-label="Apply scene" className="relative"><Ico><path d="M1 11h18v8H1z" fill="#444" stroke="none" /><path d="M2 14h5v4H2zM13 14h5v4h-5z" fill="#9fd29b" stroke="none" /><circle cx="10" cy="8.500" r="7.500" fill="#3a8fd0" stroke="none" /><path d="M10 8.500V1a7.500 7.500 0 0 1 7.500 7.500z" fill="#3fae52" stroke="none" /><path d="M10 8.500 4 3.500A7.500 7.500 0 0 1 10 1z" fill="#d33a3a" stroke="none" /><path d="M10 8.500h7.500A7.500 7.500 0 0 1 10 16z" fill="#d33a3a" stroke="none" /><path d="M10 8.500 5 14a7.500 7.500 0 0 0 5 2z" fill="#e8c63a" stroke="none" /></Ico></button>
        <C />
        <button aria-label="View settings"><Ico><path d="M1.500 3h17v11h-17z" fill="#d7dade" stroke="#666" /><path d="M10 14v4M6 18.500h8" stroke="#444" strokeWidth="1.800" /></Ico></button>
        <C />
      </div>
    </div>
  );
}

function TaskPane() {
  const items: [string, React.ReactNode][] = [
    ["Welcome", <Ico><circle cx="10" cy="10" r="9" fill="#215a86" stroke="#16405f" /><path d="M3 7c4 3 10 3 14 0M3 13c4-3 10-3 14 0M10 1v18" stroke="#5a9bc4" strokeWidth=".7" /><circle cx="10" cy="10" r="3" fill="#3f86b5" stroke="none" /></Ico>],
    ["Resources", <Home />],
    ["Design library", <Ico><path d="m3 6 8-4 6 1.500V14l-7 5-7-2.500z" fill="#f4f4f4" /><path d="m3 6 2.500 1v10.500M5.500 7l7-4.500M8 8v10.500M5.500 7 8 8l6-5M8 8l2.500.5V19M10.500 8.500 17 3.500" strokeWidth="1.100" /></Ico>],
    ["File explorer", <Ico><path d="M1 18V3h5l2 2.500h8V9" fill="#ddd" /><path d="m1 18 5-10h13.500L15 18z" fill="#fff" /></Ico>],
    ["View palette", <Ico><path d="M1.500 2.500h17v15h-17z" fill="#f1d34a" /><path d="M4 5h7v4H4z" fill="#fff" /><path d="M14 5h3v3h-3zM14 10.500h4v7h-4z" fill="#fff" /><path d="M3 15.500h9V13H9.500v-2h-4v2H3z" fill="#f6de6f" /></Ico>],
    ["Appearances", <Ball />],
    ["Custom properties", <FormIcon />],
  ];
  return (
    <div className="absolute right-0 top-[29px] flex flex-col border-l border-t border-[#8a8a8a]">
      {items.map(([l, ic], i) => (
        <button key={l} aria-label={l} className={"flex h-[30px] w-[30px] items-center justify-center border-b border-[#8a8a8a]" + (i === 0 ? " bg-white" : " bg-[#d4d4d4]")}>{ic}</button>
      ))}
    </div>
  );
}

/* ---------- footer ---------- */

function BottomTabs() {
  return (
    <div className="flex h-[21px] shrink-0 border-b border-t border-[#7d7d7d] bg-[#f7f7f7] text-[15px] leading-none">
      <div className="ml-0.5 flex border-t border-[#222] bg-[#a9a8c4]">
        {["M13 5 7 10l6 5zM5 5v10", "M13 5 7 10l6 5z", "M7 5l6 5-6 5z", "M7 5l6 5-6 5zM15 5v10"].map((d, i) => (
          <button key={i} aria-label={["First tab", "Previous tab", "Next tab", "Last tab"][i]} className="flex w-5 items-center justify-center border border-[#8b8aa6]">
            <svg viewBox="0 0 20 20" className="h-[14px] w-[14px]" fill="#85849c" stroke="#85849c" strokeWidth="2"><path d={d} /></svg>
          </button>
        ))}
      </div>
      <button className="w-[77px] border-r border-[#7d7d7d] bg-white font-bold text-[#111]">Model</button>
      <button className="w-[89px] border-r border-[#7d7d7d] bg-[#d4d4d4] text-[#333]">3D Views</button>
      <button className="w-[144px] border-r border-[#7d7d7d] bg-[#d4d4d4] pr-2.5 text-[#333]">Motion Study 1</button>
    </div>
  );
}

function StatusBar() {
  return (
    <footer className="flex h-[19px] shrink-0 items-start whitespace-nowrap bg-[#f7f7f7] pl-px text-sm leading-5 text-[#1c1c1c]">
      <span>SOLIDWORKS Student Edition - Academic Use Only</span>
      <span className="ml-auto w-[110px]">-88.794887mm</span>
      <span className="w-[121px]">233.303157mm</span>
      <span className="w-14">0mm</span>
      <span className="w-[134px]">Under Defined</span>
      <Traffic className="mt-1 h-4 w-4" />
      <span className="ml-[104px] w-[69px]">MMGS</span>
      <svg viewBox="0 0 6 4" className="mt-2.5 h-1 w-1.5" fill="#333"><path d="M0 4h6L3 0z" /></svg>
      <Ico className="ml-[27px] mr-px mt-0.5 h-4 w-4"><path d="m2 8 8-6 9 5v7l-6 5-9-6z" fill="#eee" stroke="#444" /><path d="m4 8 9 5 5-5M13 13v5M8 6l5 3" stroke="#444" /></Ico>
    </footer>
  );
}

export default function App() {
  return (
    <div className="relative flex h-screen flex-col overflow-hidden font-['Noto_Sans','Open_Sans',sans-serif]">
      <TitleBar />
      <Ribbon />
      <main className="flex min-h-0 flex-1 flex-col bg-[#dde1ea] bg-[radial-gradient(ellipse_46%_50%_at_30%_0%,#ffffff_0%,#ffffff_50%,#ffffff00_100%),linear-gradient(to_bottom,#ffffff00_58%,#ffffff_86%),radial-gradient(ellipse_26%_65%_at_100%_10%,#f3f1f8_0%,#f3f1f800_100%)]">
        <CommandTabs />
        <div className="flex min-h-0 flex-1">
          <FeaturePanel />
          <section className="relative min-w-0 flex-1 overflow-hidden">
            <Drawing />
            <HeadsUp />
            <TaskPane />
            <button aria-label="Collapse panel" className="absolute left-0 top-[375px] flex h-12 w-[11px] items-center justify-center border border-l-0 border-[#999] bg-[#f7f7f7]">
              <span className="h-[5px] w-[5px] rounded-full border border-[#999]" />
            </button>
          </section>
        </div>
      </main>
      <BottomTabs />
      <StatusBar />
      <svg viewBox="0 0 1918 1018" preserveAspectRatio="xMinYMin slice" className="pointer-events-none absolute inset-0 h-full w-full" aria-hidden="true">
        <ellipse cx="1076" cy="592" rx="313" ry="230" fill="none" stroke="#d81f24" strokeWidth="5" />
        <path d="M212 82 403 342" stroke="#e01f22" strokeWidth="5" strokeLinecap="round" />
        <path d="M199 65 203 92 223 77z" fill="#e81e1e" stroke="#e81e1e" />
      </svg>
    </div>
  );
}
